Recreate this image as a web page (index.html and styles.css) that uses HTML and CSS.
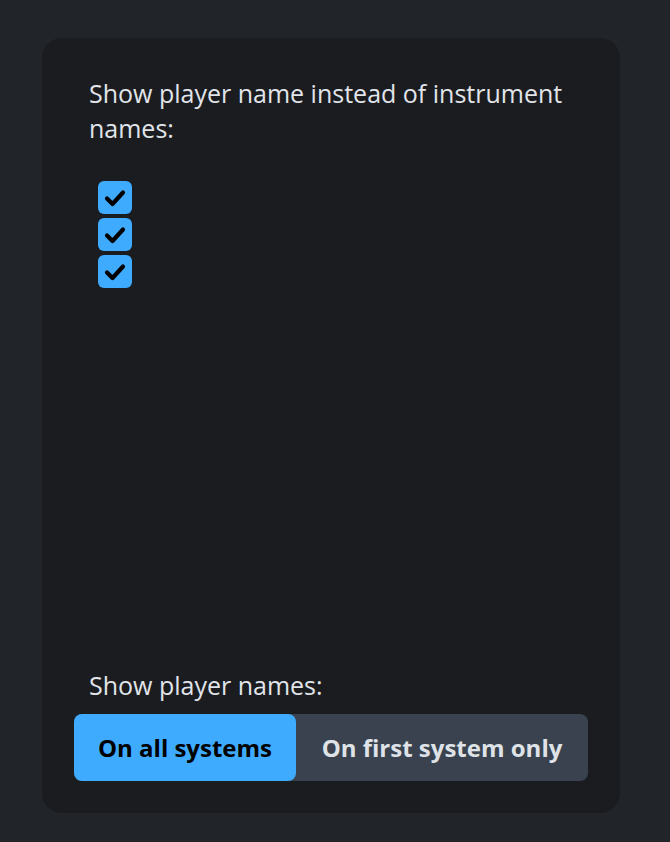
FILE: index.html
```html
<!DOCTYPE html>
<html>
<head>
<meta charset="utf-8">
<link rel="stylesheet" href="styles.css">
</head>
<body>
<div class="card">
  <div class="label heading">Show player name instead of instrument names:</div>
  <div class="checks">
    <span class="check"><svg viewBox="0 0 34 33" width="34" height="33"><path d="M9 17.5 L14.5 23 L25 11.5" fill="none" stroke="#000" stroke-width="4.2" stroke-linecap="round" stroke-linejoin="round"/></svg></span>
    <span class="check"><svg viewBox="0 0 34 33" width="34" height="33"><path d="M9 17.5 L14.5 23 L25 11.5" fill="none" stroke="#000" stroke-width="4.2" stroke-linecap="round" stroke-linejoin="round"/></svg></span>
    <span class="check"><svg viewBox="0 0 34 33" width="34" height="33"><path d="M9 17.5 L14.5 23 L25 11.5" fill="none" stroke="#000" stroke-width="4.2" stroke-linecap="round" stroke-linejoin="round"/></svg></span>
  </div>
  <div class="spacer"></div>
  <div class="label sub">Show player names:</div>
  <div class="segmented">
    <button class="seg active">On all systems</button>
    <button class="seg">On first system only</button>
  </div>
</div>
</body>
</html>
```
FILE: styles.css
```css
html, body {
  margin: 0;
  padding: 0;
  background: #212529;
  font-family: "Open Sans", Lato, sans-serif;
}
body {
  padding: 38px 50px 29px 42px;
}
.card {
  width: 578px;
  height: 775px;
  box-sizing: border-box;
  background: #1a1c20;
  border-radius: 20px;
  padding: 38px 32px 32px 32px;
  display: flex;
  flex-direction: column;
}
.label {
  color: #e1e5ea;
  font-size: 25px;
  line-height: 35px;
  padding-left: 15px;
  padding-right: 15px;
}
.checks {
  display: flex;
  flex-direction: column;
  gap: 4px;
  margin-top: 35px;
  padding-left: 24px;
}
.check {
  width: 34px;
  height: 33px;
  background: #3fabff;
  border-radius: 6px;
  display: block;
}
.check svg { display: block; }
.spacer { flex: 1; }
.sub { margin-bottom: 11px; }
.segmented {
  display: flex;
  height: 67px;
  background: #39424e;
  border-radius: 8px;
}
.seg {
  border: none;
  background: transparent;
  font-family: inherit;
  font-size: 24px;
  font-weight: 700;
  color: #dfe3e8;
  border-radius: 8px;
  padding: 0;
  cursor: pointer;
}
.seg.active {
  width: 222px;
  background: #3fabff;
  color: #000;
}
.seg:not(.active) { flex: 1; }
```
